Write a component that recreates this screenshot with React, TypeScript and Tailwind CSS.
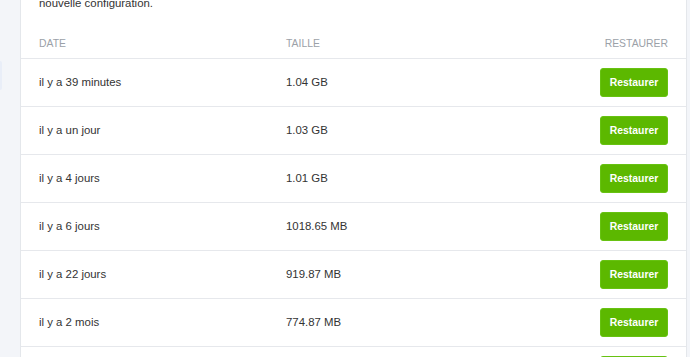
import React from "react";

const rows = [
  { date: "il y a 39 minutes", size: "1.04 GB" },
  { date: "il y a un jour", size: "1.03 GB" },
  { date: "il y a 4 jours", size: "1.01 GB" },
  { date: "il y a 6 jours", size: "1018.65 MB" },
  { date: "il y a 22 jours", size: "919.87 MB" },
  { date: "il y a 2 mois", size: "774.87 MB" },
  { date: "il y a 3 mois", size: "701.20 MB" },
];

export default function App() {
  return (
    <div
      className="flex h-[357px] w-[690px] overflow-hidden bg-[#f3f5f9]"
      style={{ fontFamily: '"Liberation Sans", Arial, sans-serif' }}
    >
      <div className="w-[20px] shrink-0 pt-[61px]">
        <div className="h-[29px] w-[2px] rounded-r-[2px] bg-[#e9eef8]" />
      </div>
      <div className="flex w-[667px] shrink-0 flex-col border-x border-[#e4e7eb] bg-white">
        <p className="mt-[-5px] px-[18px] text-[11.4px] leading-[16px] text-[#333]">
          nouvelle configuration.
        </p>
        <div className="flex items-center border-b border-[#e6e8ec] px-[18px] pt-[26px] pb-[7px] text-[10.4px] leading-[14px] uppercase text-[#9ba1a8]">
          <div className="w-[247px] shrink-0">Date</div>
          <div className="flex-1">Taille</div>
          <div>Restaurer</div>
        </div>
        {rows.map((r) => (
          <div
            key={r.date}
            className="flex h-[48px] shrink-0 items-center border-b border-[#e6e8ec] px-[18px] text-[11.4px] text-[#333]"
          >
            <div className="w-[247px] shrink-0">{r.date}</div>
            <div className="flex-1">{r.size}</div>
            <button className="h-[29px] w-[68px] rounded-[3px] border border-[#67c212] bg-[#5cb800] text-[10.4px] font-bold text-white">
              Restaurer
            </button>
          </div>
        ))}
      </div>
    </div>
  );
}
